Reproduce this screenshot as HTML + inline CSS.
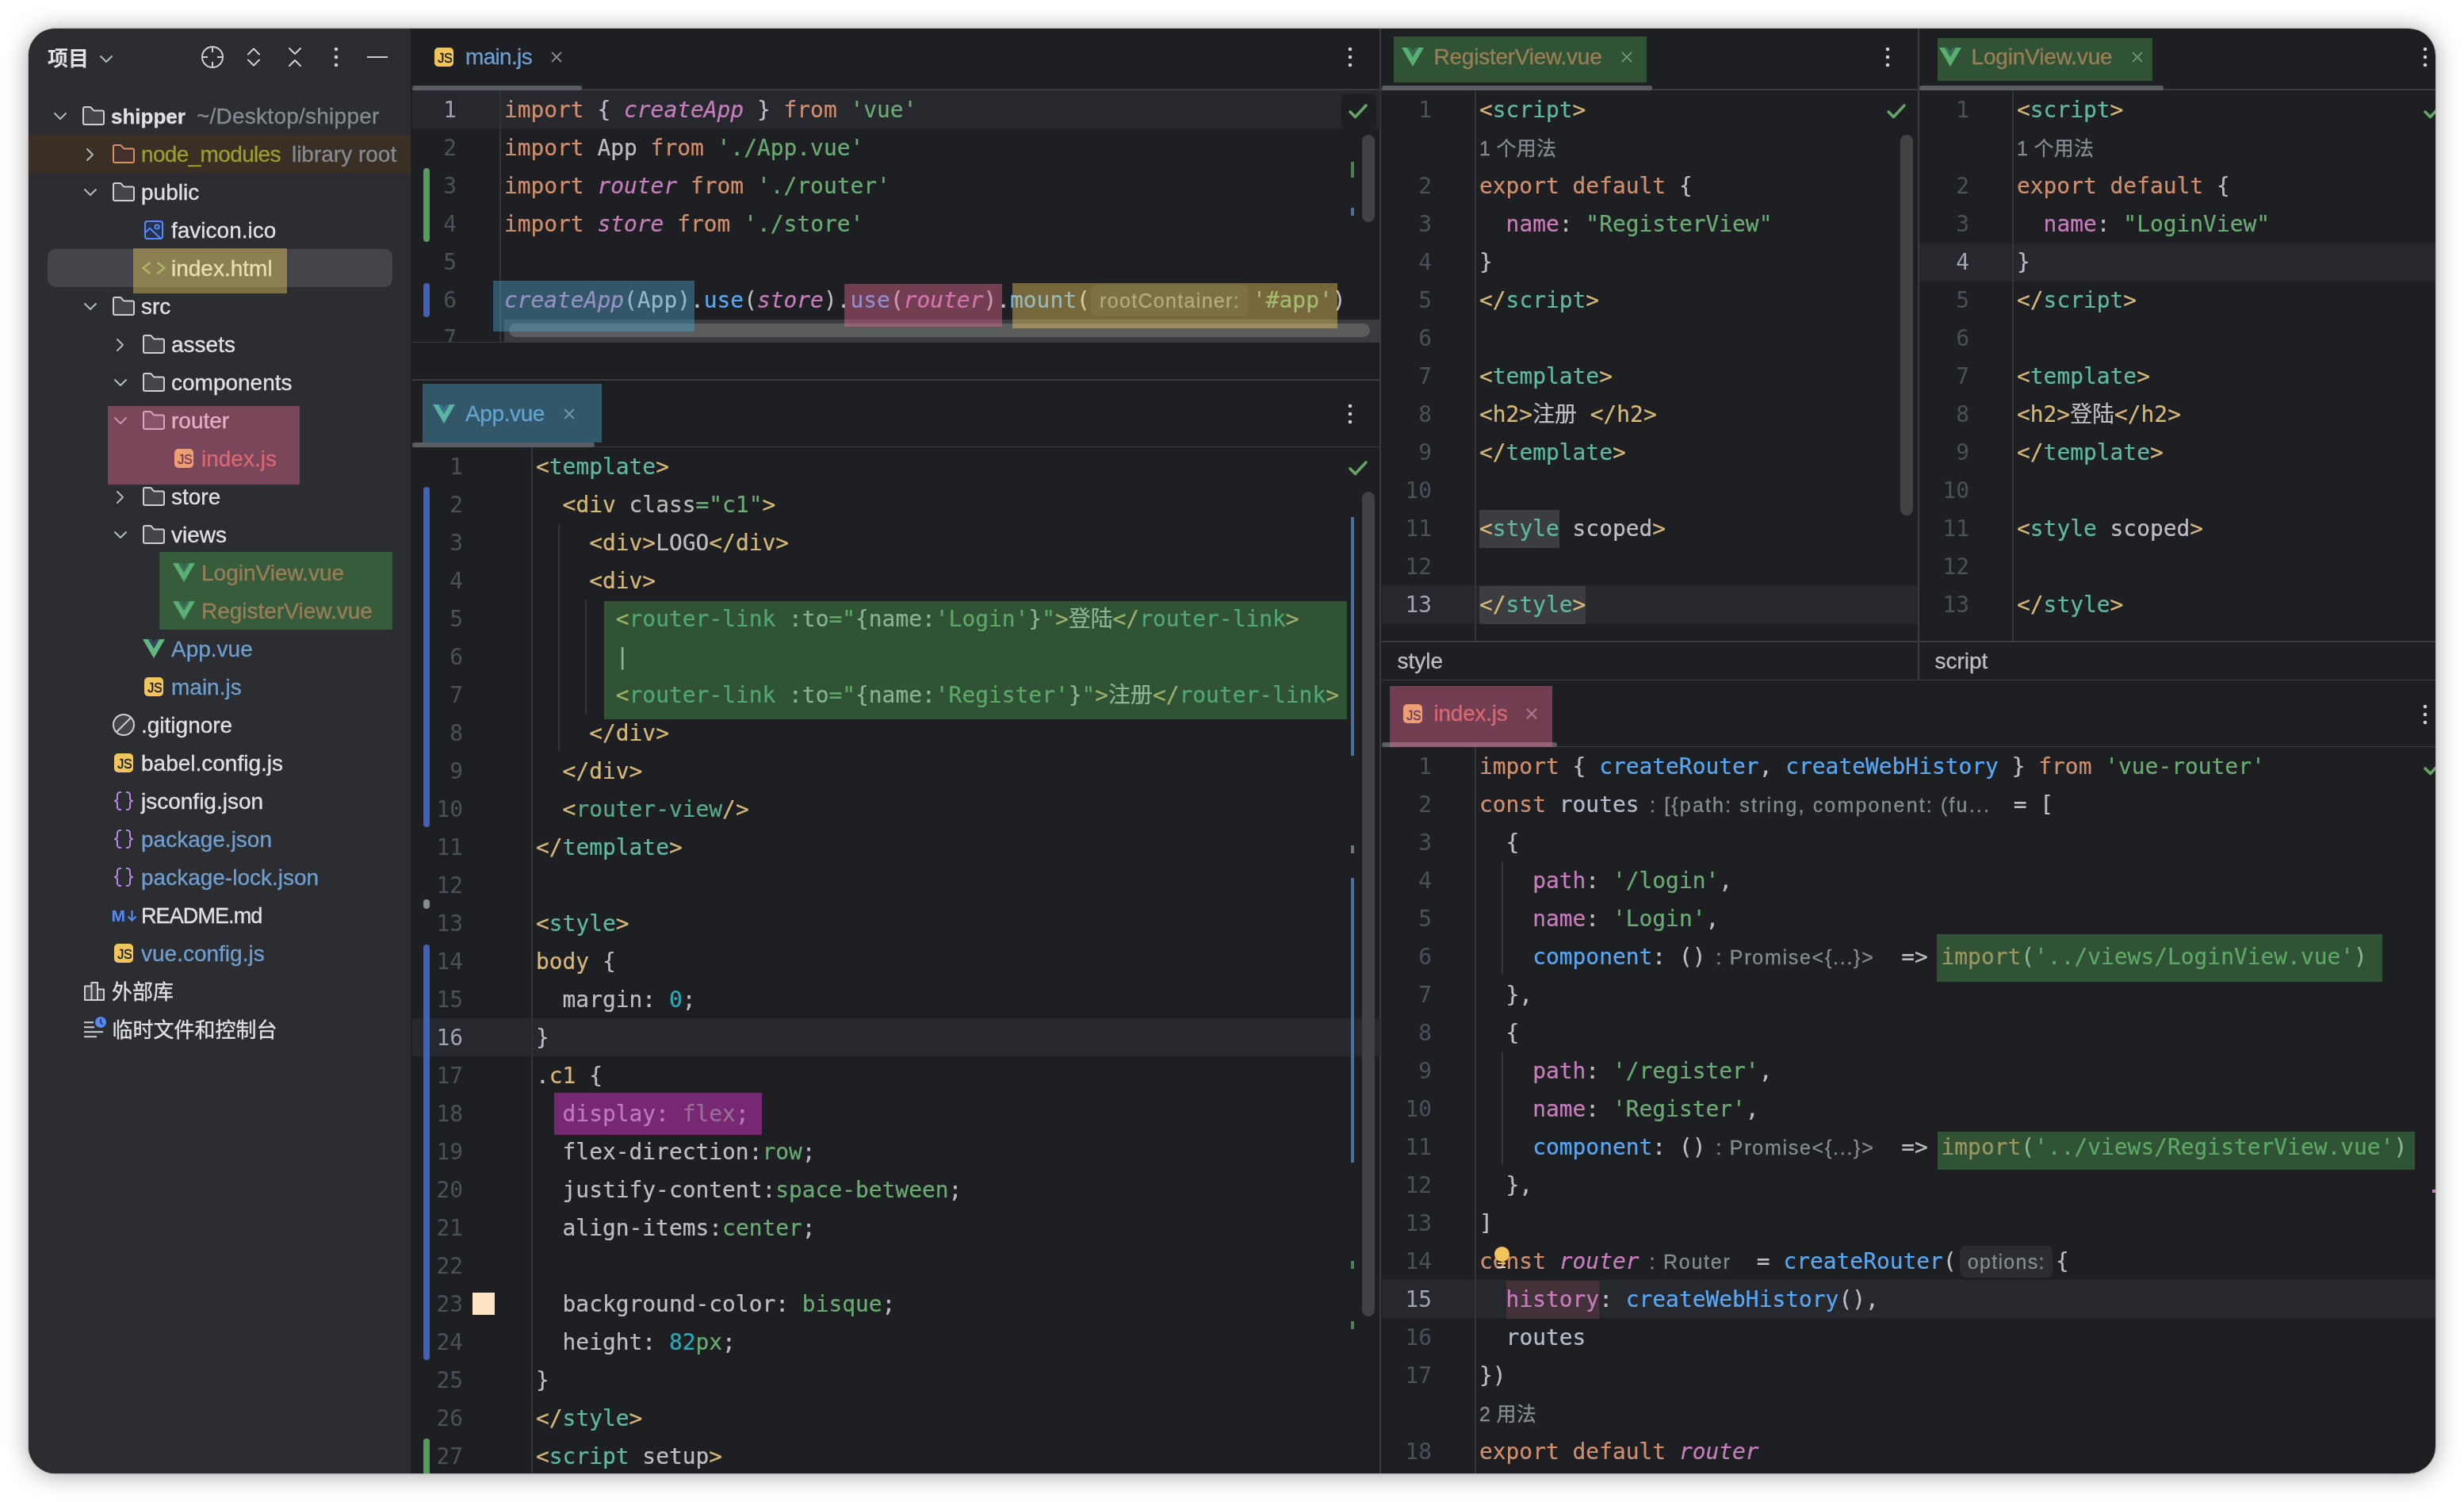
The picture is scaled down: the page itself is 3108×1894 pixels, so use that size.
<!DOCTYPE html><html lang="zh"><head><meta charset="utf-8"><title>shipper</title><style>
*{box-sizing:border-box}
html,body{margin:0;padding:0}
body{width:3108px;height:1894px;background:#fff;overflow:hidden;position:relative;font-family:"Liberation Sans","Noto Sans CJK SC",sans-serif}
#win{will-change:transform;position:absolute;left:36px;top:36px;width:3036px;height:1822px;border-radius:34px;background:#1e1f22;overflow:hidden}
#shadow{position:absolute;left:36px;top:36px;width:3036px;height:1822px;border-radius:34px;box-shadow:0 2px 30px rgba(0,0,0,.36),0 0 1.5px rgba(0,0,0,.6)}
.abs{position:absolute}
#side{position:absolute;left:0;top:0;width:482px;height:1822px;background:#2b2d30}
.row{position:absolute;left:0;height:48px;line-height:48px;font-size:28px;letter-spacing:0;color:#dfe1e5;white-space:pre}
.row .g{color:#868a91}
.row,.tab,.bc,.ih,.ihb{-webkit-text-stroke:.3px}
.mono,.ln,.cl{font-family:"DejaVu Sans Mono","Liberation Mono","Noto Sans CJK SC",monospace;font-size:27.9px}
.mt{background:#3b3d41;display:inline-block;height:48px}
.wr{background:#43313a;display:inline-block;height:48px}
.cl{-webkit-text-stroke:.22px;position:absolute;height:48px;line-height:48px;white-space:pre;color:#bcbec4}
.ln{position:absolute;height:48px;line-height:48px;text-align:right;color:#4b5059;width:80px}
.ln.cur{color:#a1a3ab}
.hl{position:absolute;background:#26282e;height:48px}
.vline{position:absolute;width:2px;background:#313438}
.hline{position:absolute;height:2px;background:#393b40}
.k{color:#cf8e6d}.s{color:#6aab73}.n{color:#2aacb8}.p{color:#c77dbb}.pi{color:#c77dbb;font-style:italic}
.f{color:#56a8f5}.t{color:#d5b778}.v{color:#5fb8a0}.c{color:#57aa88}.a{color:#bababa}.lv{color:#b3bcc7}
.ih{font-family:"Liberation Sans","Noto Sans CJK SC",sans-serif;font-size:25px;letter-spacing:.3px;color:#868a91;display:inline-block;white-space:pre;height:48px;vertical-align:top}
.ihb{font-family:"Liberation Sans",sans-serif;font-size:25px;letter-spacing:.3px;color:#868a91;display:inline-block;white-space:pre;background:#2b2d30;border-radius:8px;height:40px;line-height:40px;vertical-align:top;margin-top:4px;text-align:center}
.tab{position:absolute;font-size:27px;letter-spacing:.4px;white-space:pre;height:48px;line-height:48px}
.bc{position:absolute;font-size:28px;letter-spacing:0;color:#bcbec4;height:48px;line-height:48px}
svg{position:absolute;overflow:visible}
</style></head><body>
<div id="shadow"></div><div id="win">
<div id="side">
<div class="abs" style="left:24px;top:13.5px;height:48px;line-height:48px;font-size:26px;font-weight:bold;color:#dfe1e5;letter-spacing:0">项目</div>
<svg style="left:90px;top:33.5px" width="16" height="9" viewBox="0 0 16 9" ><path d="M1 1 L8 8 L15 1" fill="none" stroke="#b4b8bf" stroke-width="2" stroke-linecap="round" stroke-linejoin="round"/></svg>
<svg style="left:218px;top:22px" width="28" height="28" viewBox="0 0 28 28" ><circle cx="14" cy="14" r="13" fill="none" stroke="#ced0d6" stroke-width="2"/><path d="M14 1 V8 M14 20 V27 M1 14 H8 M20 14 H27" stroke="#ced0d6" stroke-width="2"/></svg>
<svg style="left:276px;top:24px" width="16" height="24" viewBox="0 0 16 24" ><path d="M1 8.5 L8 1.5 L15 8.5 M1 15.5 L8 22.5 L15 15.5" fill="none" stroke="#ced0d6" stroke-width="2" stroke-linecap="round" stroke-linejoin="round"/></svg>
<svg style="left:328px;top:24px" width="16" height="24" viewBox="0 0 16 24" ><path d="M1 1 L8 8 L15 1 M1 23 L8 16 L15 23" fill="none" stroke="#ced0d6" stroke-width="2" stroke-linecap="round" stroke-linejoin="round"/></svg>
<svg style="left:385px;top:23px" width="6" height="26" viewBox="0 0 6 26" ><circle cx="3" cy="3" r="2.3" fill="#ced0d6"/><circle cx="3" cy="13" r="2.3" fill="#ced0d6"/><circle cx="3" cy="23" r="2.3" fill="#ced0d6"/></svg>
<div class="abs" style="left:427px;top:35px;width:26px;height:2px;background:#ced0d6;"></div>
<div class="abs" style="left:0px;top:134px;width:482px;height:48px;background:#3a2f25;"></div>
<div class="abs" style="left:24px;top:278px;width:434.5px;height:48px;border-radius:10px;background:#43454a"></div>
<svg style="left:32px;top:105.5px" width="16" height="9" viewBox="0 0 16 9" ><path d="M1 1 L8 8 L15 1" fill="none" stroke="#b4b8bf" stroke-width="2" stroke-linecap="round" stroke-linejoin="round"/></svg>
<svg style="left:68px;top:98px" width="28" height="24" viewBox="0 0 28 24" ><path d="M3 1 H9.2 C10 1 10.6 1.3 11.1 1.9 L13.6 4.9 C14 5.4 14.6 5.6 15.2 5.6 H25 A2 2 0 0 1 27 7.6 V21 A2 2 0 0 1 25 23 H3 A2 2 0 0 1 1 21 V3 A2 2 0 0 1 3 1 Z" fill="#43454a" stroke="#ced0d6" stroke-width="2" stroke-linejoin="round"/></svg>
<div class="row" style="left:104px;top:87px;"><b style="letter-spacing:0;font-size:26px">shipper</b><span class="g" style="margin-left:14px;letter-spacing:0.25px">~/Desktop/shipper</span></div>
<svg style="left:73px;top:151px" width="9" height="16" viewBox="0 0 9 16" ><path d="M1 1 L8 8 L1 15" fill="none" stroke="#b4b8bf" stroke-width="2" stroke-linecap="round" stroke-linejoin="round"/></svg>
<svg style="left:106px;top:146px" width="28" height="24" viewBox="0 0 28 24" ><path d="M3 1 H9.2 C10 1 10.6 1.3 11.1 1.9 L13.6 4.9 C14 5.4 14.6 5.6 15.2 5.6 H25 A2 2 0 0 1 27 7.6 V21 A2 2 0 0 1 25 23 H3 A2 2 0 0 1 1 21 V3 A2 2 0 0 1 3 1 Z" fill="#43302a" stroke="#d98f63" stroke-width="2" stroke-linejoin="round"/></svg>
<div class="row" style="left:142px;top:135px;color:#9c9d2e;letter-spacing:-.65px;">node_modules<span class="g" style="margin-left:14px;letter-spacing:0px">library root</span></div>
<svg style="left:70px;top:201.5px" width="16" height="9" viewBox="0 0 16 9" ><path d="M1 1 L8 8 L15 1" fill="none" stroke="#b4b8bf" stroke-width="2" stroke-linecap="round" stroke-linejoin="round"/></svg>
<svg style="left:106px;top:194px" width="28" height="24" viewBox="0 0 28 24" ><path d="M3 1 H9.2 C10 1 10.6 1.3 11.1 1.9 L13.6 4.9 C14 5.4 14.6 5.6 15.2 5.6 H25 A2 2 0 0 1 27 7.6 V21 A2 2 0 0 1 25 23 H3 A2 2 0 0 1 1 21 V3 A2 2 0 0 1 3 1 Z" fill="#43454a" stroke="#ced0d6" stroke-width="2" stroke-linejoin="round"/></svg>
<div class="row" style="left:142px;top:183px;">public</div>
<svg style="left:146px;top:242px" width="24" height="24" viewBox="0 0 24 24" ><rect x="1" y="1" width="22" height="22" rx="3" fill="#25324d" stroke="#548af7" stroke-width="2"/><circle cx="16" cy="8" r="2.6" fill="none" stroke="#548af7" stroke-width="2"/><path d="M1.5 15 L7 10 L21 23" fill="none" stroke="#548af7" stroke-width="2" stroke-linejoin="round"/></svg>
<div class="row" style="left:180px;top:231px;">favicon.ico</div>
<svg style="left:143px;top:294px" width="30" height="16" viewBox="0 0 30 16" ><path d="M10.5 1 L1.5 8 L10.5 15 M19.5 1 L28.5 8 L19.5 15" fill="none" stroke="#7aa65a" stroke-width="2.4" stroke-linejoin="miter"/></svg>
<div class="row" style="left:180px;top:279px;">index.html</div>
<svg style="left:70px;top:345.5px" width="16" height="9" viewBox="0 0 16 9" ><path d="M1 1 L8 8 L15 1" fill="none" stroke="#b4b8bf" stroke-width="2" stroke-linecap="round" stroke-linejoin="round"/></svg>
<svg style="left:106px;top:338px" width="28" height="24" viewBox="0 0 28 24" ><path d="M3 1 H9.2 C10 1 10.6 1.3 11.1 1.9 L13.6 4.9 C14 5.4 14.6 5.6 15.2 5.6 H25 A2 2 0 0 1 27 7.6 V21 A2 2 0 0 1 25 23 H3 A2 2 0 0 1 1 21 V3 A2 2 0 0 1 3 1 Z" fill="#43454a" stroke="#ced0d6" stroke-width="2" stroke-linejoin="round"/></svg>
<div class="row" style="left:142px;top:327px;">src</div>
<svg style="left:111px;top:391px" width="9" height="16" viewBox="0 0 9 16" ><path d="M1 1 L8 8 L1 15" fill="none" stroke="#b4b8bf" stroke-width="2" stroke-linecap="round" stroke-linejoin="round"/></svg>
<svg style="left:144px;top:386px" width="28" height="24" viewBox="0 0 28 24" ><path d="M3 1 H9.2 C10 1 10.6 1.3 11.1 1.9 L13.6 4.9 C14 5.4 14.6 5.6 15.2 5.6 H25 A2 2 0 0 1 27 7.6 V21 A2 2 0 0 1 25 23 H3 A2 2 0 0 1 1 21 V3 A2 2 0 0 1 3 1 Z" fill="#43454a" stroke="#ced0d6" stroke-width="2" stroke-linejoin="round"/></svg>
<div class="row" style="left:180px;top:375px;">assets</div>
<svg style="left:108px;top:441.5px" width="16" height="9" viewBox="0 0 16 9" ><path d="M1 1 L8 8 L15 1" fill="none" stroke="#b4b8bf" stroke-width="2" stroke-linecap="round" stroke-linejoin="round"/></svg>
<svg style="left:144px;top:434px" width="28" height="24" viewBox="0 0 28 24" ><path d="M3 1 H9.2 C10 1 10.6 1.3 11.1 1.9 L13.6 4.9 C14 5.4 14.6 5.6 15.2 5.6 H25 A2 2 0 0 1 27 7.6 V21 A2 2 0 0 1 25 23 H3 A2 2 0 0 1 1 21 V3 A2 2 0 0 1 3 1 Z" fill="#43454a" stroke="#ced0d6" stroke-width="2" stroke-linejoin="round"/></svg>
<div class="row" style="left:180px;top:423px;">components</div>
<svg style="left:108px;top:489.5px" width="16" height="9" viewBox="0 0 16 9" ><path d="M1 1 L8 8 L15 1" fill="none" stroke="#b4b8bf" stroke-width="2" stroke-linecap="round" stroke-linejoin="round"/></svg>
<svg style="left:144px;top:482px" width="28" height="24" viewBox="0 0 28 24" ><path d="M3 1 H9.2 C10 1 10.6 1.3 11.1 1.9 L13.6 4.9 C14 5.4 14.6 5.6 15.2 5.6 H25 A2 2 0 0 1 27 7.6 V21 A2 2 0 0 1 25 23 H3 A2 2 0 0 1 1 21 V3 A2 2 0 0 1 3 1 Z" fill="#43454a" stroke="#ced0d6" stroke-width="2" stroke-linejoin="round"/></svg>
<div class="row" style="left:180px;top:471px;">router</div>
<div class="abs" style="left:184px;top:530px;width:24px;height:24px;border-radius:5px;background:#f2c55c;color:#1e1f22;font:normal 16px 'Liberation Sans',sans-serif;-webkit-text-stroke:.45px #1e1f22;letter-spacing:-.2px;line-height:16px;text-align:right;padding:6.3px 1.6px 0 0;overflow:hidden">JS</div>
<div class="row" style="left:218px;top:519px;color:#d1675a;">index.js</div>
<svg style="left:111px;top:583px" width="9" height="16" viewBox="0 0 9 16" ><path d="M1 1 L8 8 L1 15" fill="none" stroke="#b4b8bf" stroke-width="2" stroke-linecap="round" stroke-linejoin="round"/></svg>
<svg style="left:144px;top:578px" width="28" height="24" viewBox="0 0 28 24" ><path d="M3 1 H9.2 C10 1 10.6 1.3 11.1 1.9 L13.6 4.9 C14 5.4 14.6 5.6 15.2 5.6 H25 A2 2 0 0 1 27 7.6 V21 A2 2 0 0 1 25 23 H3 A2 2 0 0 1 1 21 V3 A2 2 0 0 1 3 1 Z" fill="#43454a" stroke="#ced0d6" stroke-width="2" stroke-linejoin="round"/></svg>
<div class="row" style="left:180px;top:567px;">store</div>
<svg style="left:108px;top:633.5px" width="16" height="9" viewBox="0 0 16 9" ><path d="M1 1 L8 8 L15 1" fill="none" stroke="#b4b8bf" stroke-width="2" stroke-linecap="round" stroke-linejoin="round"/></svg>
<svg style="left:144px;top:626px" width="28" height="24" viewBox="0 0 28 24" ><path d="M3 1 H9.2 C10 1 10.6 1.3 11.1 1.9 L13.6 4.9 C14 5.4 14.6 5.6 15.2 5.6 H25 A2 2 0 0 1 27 7.6 V21 A2 2 0 0 1 25 23 H3 A2 2 0 0 1 1 21 V3 A2 2 0 0 1 3 1 Z" fill="#43454a" stroke="#ced0d6" stroke-width="2" stroke-linejoin="round"/></svg>
<div class="row" style="left:180px;top:615px;">views</div>
<svg style="left:182px;top:673.5px" width="28" height="24" viewBox="0 0 28 24" ><path d="M0 0 H7 L14 11.8 L21 0 H28 L14 24 Z" fill="#5fb883"/><path d="M7 0 H11.3 L14 4.7 L16.7 0 H21 L14 11.8 Z" fill="#35495e"/></svg>
<div class="row" style="left:218px;top:663px;color:#d1675a;">LoginView.vue</div>
<svg style="left:182px;top:721.5px" width="28" height="24" viewBox="0 0 28 24" ><path d="M0 0 H7 L14 11.8 L21 0 H28 L14 24 Z" fill="#5fb883"/><path d="M7 0 H11.3 L14 4.7 L16.7 0 H21 L14 11.8 Z" fill="#35495e"/></svg>
<div class="row" style="left:218px;top:711px;color:#d1675a;">RegisterView.vue</div>
<svg style="left:144px;top:769.5px" width="28" height="24" viewBox="0 0 28 24" ><path d="M0 0 H7 L14 11.8 L21 0 H28 L14 24 Z" fill="#5fb883"/><path d="M7 0 H11.3 L14 4.7 L16.7 0 H21 L14 11.8 Z" fill="#35495e"/></svg>
<div class="row" style="left:180px;top:759px;color:#6f9fd0;">App.vue</div>
<div class="abs" style="left:146px;top:818px;width:24px;height:24px;border-radius:5px;background:#f2c55c;color:#1e1f22;font:normal 16px 'Liberation Sans',sans-serif;-webkit-text-stroke:.45px #1e1f22;letter-spacing:-.2px;line-height:16px;text-align:right;padding:6.3px 1.6px 0 0;overflow:hidden">JS</div>
<div class="row" style="left:180px;top:807px;color:#6f9fd0;">main.js</div>
<svg style="left:106px;top:864px" width="28" height="28" viewBox="0 0 28 28" ><circle cx="14" cy="14" r="13" fill="#43454a" stroke="#ced0d6" stroke-width="2"/><path d="M5 23 L23 5" stroke="#ced0d6" stroke-width="2"/></svg>
<div class="row" style="left:142px;top:855px;">.gitignore</div>
<div class="abs" style="left:108px;top:914px;width:24px;height:24px;border-radius:5px;background:#f2c55c;color:#1e1f22;font:normal 16px 'Liberation Sans',sans-serif;-webkit-text-stroke:.45px #1e1f22;letter-spacing:-.2px;line-height:16px;text-align:right;padding:6.3px 1.6px 0 0;overflow:hidden">JS</div>
<div class="row" style="left:142px;top:903px;">babel.config.js</div>
<svg style="left:108px;top:962px" width="24" height="24" viewBox="0 0 24 24" ><path d="M9 1 H7.5 A3.5 3.5 0 0 0 4 4.5 V8.5 A3.5 3.5 0 0 1 1 12 A3.5 3.5 0 0 1 4 15.5 V19.5 A3.5 3.5 0 0 0 7.5 23 H9 M15 1 H16.5 A3.5 3.5 0 0 1 20 4.5 V8.5 A3.5 3.5 0 0 0 23 12 A3.5 3.5 0 0 0 20 15.5 V19.5 A3.5 3.5 0 0 1 16.5 23 H15" fill="none" stroke="#b589ec" stroke-width="2" stroke-linejoin="round"/></svg>
<div class="row" style="left:142px;top:951px;">jsconfig.json</div>
<svg style="left:108px;top:1010px" width="24" height="24" viewBox="0 0 24 24" ><path d="M9 1 H7.5 A3.5 3.5 0 0 0 4 4.5 V8.5 A3.5 3.5 0 0 1 1 12 A3.5 3.5 0 0 1 4 15.5 V19.5 A3.5 3.5 0 0 0 7.5 23 H9 M15 1 H16.5 A3.5 3.5 0 0 1 20 4.5 V8.5 A3.5 3.5 0 0 0 23 12 A3.5 3.5 0 0 0 20 15.5 V19.5 A3.5 3.5 0 0 1 16.5 23 H15" fill="none" stroke="#b589ec" stroke-width="2" stroke-linejoin="round"/></svg>
<div class="row" style="left:142px;top:999px;color:#6f9fd0;">package.json</div>
<svg style="left:108px;top:1058px" width="24" height="24" viewBox="0 0 24 24" ><path d="M9 1 H7.5 A3.5 3.5 0 0 0 4 4.5 V8.5 A3.5 3.5 0 0 1 1 12 A3.5 3.5 0 0 1 4 15.5 V19.5 A3.5 3.5 0 0 0 7.5 23 H9 M15 1 H16.5 A3.5 3.5 0 0 1 20 4.5 V8.5 A3.5 3.5 0 0 0 23 12 A3.5 3.5 0 0 0 20 15.5 V19.5 A3.5 3.5 0 0 1 16.5 23 H15" fill="none" stroke="#b589ec" stroke-width="2" stroke-linejoin="round"/></svg>
<div class="row" style="left:142px;top:1047px;color:#6f9fd0;">package-lock.json</div>
<div class="abs" style="left:104.5px;top:1107px;width:20px;height:24px;color:#548af7;font:bold 21px 'Liberation Sans',sans-serif;line-height:24px;letter-spacing:0">M</div>
<svg style="left:123.5px;top:1111px" width="13" height="16" viewBox="0 0 13 16" ><path d="M6.5 1 V13.5 M1.5 8.8 L6.5 13.8 L11.5 8.8" fill="none" stroke="#548af7" stroke-width="2.2"/></svg>
<div class="row" style="left:142px;top:1095px;letter-spacing:-.9px;font-size:27px;">README.md</div>
<div class="abs" style="left:108px;top:1154px;width:24px;height:24px;border-radius:5px;background:#f2c55c;color:#1e1f22;font:normal 16px 'Liberation Sans',sans-serif;-webkit-text-stroke:.45px #1e1f22;letter-spacing:-.2px;line-height:16px;text-align:right;padding:6.3px 1.6px 0 0;overflow:hidden">JS</div>
<div class="row" style="left:142px;top:1143px;color:#6f9fd0;">vue.config.js</div>
<svg style="left:70px;top:1202px" width="26" height="24" viewBox="0 0 26 24" ><path d="M1 5.5 H9.5 V23 H1 Z M9.5 1 H17 V23 H9.5 Z M17 9.5 H25 V23 H17 Z" fill="#43454a" stroke="#ced0d6" stroke-width="2" stroke-linejoin="round"/></svg>
<div class="row" style="left:105px;top:1191px;font-size:26px;letter-spacing:0;">外部库</div>
<svg style="left:70px;top:1245px" width="30" height="30" viewBox="0 0 30 30" ><path d="M0 8.2 H12 M0 14.2 H13 M0 20.2 H24 M0 26.2 H16" stroke="#ced0d6" stroke-width="2" fill="none"/><circle cx="21" cy="8" r="7" fill="#548af7"/><path d="M21 3.8 V8.3 L23.8 11" stroke="#2b2d30" stroke-width="1.6" fill="none"/></svg>
<div class="row" style="left:105.5px;top:1239px;font-size:26px;letter-spacing:0;">临时文件和控制台</div>
<div class="abs" style="left:132px;top:277px;width:194px;height:57px;background:rgba(249,214,101,.40);"></div>
<div class="abs" style="left:100px;top:475.5px;width:242px;height:99.0px;background:rgba(230,105,150,.42);"></div>
<div class="abs" style="left:165px;top:659.5px;width:294px;height:98.5px;background:rgba(73,162,80,.40);"></div>
</div>
<div class="abs" style="left:1704px;top:0px;width:2px;height:1822px;background:#393b40;"></div>
<div class="abs" style="left:2383px;top:0px;width:2px;height:821px;background:#393b40;"></div>
<div class="abs" style="left:484px;top:76px;width:2553px;height:1.5px;background:#393b40;"></div>
<div class="abs" style="left:484px;top:394.8px;width:1220.5px;height:1.5px;background:#393b40;"></div>
<div class="abs" style="left:484px;top:442.3px;width:1220.5px;height:1.7px;background:#393b40;"></div>
<div class="abs" style="left:484px;top:526.5px;width:1220.5px;height:1.5px;background:#393b40;"></div>
<div class="abs" style="left:1706.5px;top:772px;width:1330.5px;height:1.5px;background:#393b40;"></div>
<div class="abs" style="left:1706.5px;top:820.5px;width:1330.5px;height:1.7px;background:#393b40;"></div>
<div class="abs" style="left:1706.5px;top:904.5px;width:1330.5px;height:1.5px;background:#393b40;"></div>
<div class="abs" style="left:512px;top:24px;width:24px;height:24px;border-radius:5px;background:#f2c55c;color:#1e1f22;font:normal 16px 'Liberation Sans',sans-serif;-webkit-text-stroke:.45px #1e1f22;letter-spacing:-.2px;line-height:16px;text-align:right;padding:6.3px 1.6px 0 0;overflow:hidden">JS</div>
<div class="tab" style="left:551px;top:12px;color:#6f9fd0;font-size:28px;letter-spacing:-0.67px">main.js</div>
<svg style="left:659.3px;top:29.3px" width="14" height="14" viewBox="0 0 14 14" ><path d="M1 1 L13 13 M13 1 L1 13" stroke="#868a91" stroke-width="1.8" fill="none"/></svg>
<svg style="left:1663.7px;top:23px" width="6" height="26" viewBox="0 0 6 26" ><circle cx="3" cy="3" r="2.3" fill="#ced0d6"/><circle cx="3" cy="13" r="2.3" fill="#ced0d6"/><circle cx="3" cy="23" r="2.3" fill="#ced0d6"/></svg>
<div class="abs" style="left:484px;top:72px;width:214px;height:5.5px;border-radius:3px;background:#5a5d63"></div>
<div class="abs" style="left:484px;top:78px;width:1220.5px;height:316.8px;overflow:hidden">
<div class="hl" style="left:0;top:0.3px;width:1220.5px"></div>
<div class="vline" style="left:110.4px;top:0;height:316.8px;width:1.5px;background:#313438"></div>
<div class="ln cur" style="left:-24px;top:0.7px">1</div>
<div class="cl" style="left:115.9px;top:0.7px"><span class="k">import</span> { <span class="pi">createApp</span> } <span class="k">from</span> <span class="s">&#x27;vue&#x27;</span></div>
<div class="ln" style="left:-24px;top:48.7px">2</div>
<div class="cl" style="left:115.9px;top:48.7px"><span class="k">import</span> App <span class="k">from</span> <span class="s">&#x27;./App.vue&#x27;</span></div>
<div class="ln" style="left:-24px;top:96.7px">3</div>
<div class="cl" style="left:115.9px;top:96.7px"><span class="k">import</span> <span class="pi">router</span> <span class="k">from</span> <span class="s">&#x27;./router&#x27;</span></div>
<div class="ln" style="left:-24px;top:144.7px">4</div>
<div class="cl" style="left:115.9px;top:144.7px"><span class="k">import</span> <span class="pi">store</span> <span class="k">from</span> <span class="s">&#x27;./store&#x27;</span></div>
<div class="ln" style="left:-24px;top:192.7px">5</div>
<div class="ln" style="left:-24px;top:240.7px">6</div>
<div class="cl" style="left:115.9px;top:240.7px"><span class="pi">createApp</span>(App).<span class="f">use</span>(<span class="pi">store</span>).<span class="f">use</span>(<span class="pi">router</span>).<span class="f">mount</span>(<span class="ihb" style="width:198.5px;margin-left:1.5px;margin-right:5.2px;letter-spacing:1.327px;font-size:25px">rootContainer:</span><span class="s">&#x27;#app&#x27;</span>)</div>
<div class="ln" style="left:-24px;top:288.7px">7</div>
</div>
<div class="abs" style="left:498px;top:176px;width:8px;height:92.5px;border-radius:4px;background:#5a9a62"></div>
<div class="abs" style="left:498px;top:320.5px;width:8px;height:43.5px;border-radius:4px;background:#4561b0"></div>
<div class="abs" style="left:600px;top:366.5px;width:1104.5px;height:28.3px;background:#3a3b3e;"></div>
<div class="abs" style="left:605.5px;top:372px;width:1086.0px;height:16.5px;border-radius:8.5px;background:#5b5c5e"></div>
<div class="abs" style="left:1655.7px;top:82px;width:44px;height:44px;border-radius:7px;background:#1e1f22"></div>
<svg style="left:1664.6px;top:93.5px" width="24" height="20" viewBox="0 0 24 20" ><path d="M2 11 L8.5 17.5 L22 3" fill="none" stroke="#67a566" stroke-width="3.6" stroke-linecap="round" stroke-linejoin="round"/></svg>
<div class="abs" style="left:1681.7px;top:134px;width:16px;height:110px;border-radius:8px;background:#414244"></div>
<div class="abs" style="left:1667.8px;top:168px;width:4.2px;height:20px;background:#4e8054;"></div>
<div class="abs" style="left:1667.8px;top:226px;width:4.2px;height:10px;background:#4e6f9e;"></div>
<svg style="left:510px;top:473.5px" width="28" height="24" viewBox="0 0 28 24" ><path d="M0 0 H7 L14 11.8 L21 0 H28 L14 24 Z" fill="#5fb883"/><path d="M7 0 H11.3 L14 4.7 L16.7 0 H21 L14 11.8 Z" fill="#35495e"/></svg>
<div class="tab" style="left:551px;top:462.3px;color:#6f9fd0;font-size:28px;letter-spacing:-0.392px">App.vue</div>
<svg style="left:675px;top:479.3px" width="14" height="14" viewBox="0 0 14 14" ><path d="M1 1 L13 13 M13 1 L1 13" stroke="#868a91" stroke-width="1.8" fill="none"/></svg>
<svg style="left:1663.7px;top:473px" width="6" height="26" viewBox="0 0 6 26" ><circle cx="3" cy="3" r="2.3" fill="#ced0d6"/><circle cx="3" cy="13" r="2.3" fill="#ced0d6"/><circle cx="3" cy="23" r="2.3" fill="#ced0d6"/></svg>
<div class="abs" style="left:484px;top:522.3px;width:230px;height:5.7000000000000455px;border-radius:3px;background:#5a5d63"></div>
<div class="abs" style="left:484px;top:528px;width:1220.5px;height:1294px;overflow:hidden">
<div class="hl" style="left:0;top:720.3px;width:1220.5px"></div>
<div class="vline" style="left:150.4px;top:0;height:1294px;width:1.5px;background:#313438"></div>
<div class="ln" style="left:-16px;top:0.7px">1</div>
<div class="cl" style="left:156.0px;top:0.7px"><span class="t">&lt;</span><span class="v">template</span><span class="t">&gt;</span></div>
<div class="ln" style="left:-16px;top:48.7px">2</div>
<div class="cl" style="left:156.0px;top:48.7px">  <span class="t">&lt;div</span> <span class="a">class</span><span class="s">=&quot;c1&quot;</span><span class="t">&gt;</span></div>
<div class="ln" style="left:-16px;top:96.7px">3</div>
<div class="cl" style="left:156.0px;top:96.7px">    <span class="t">&lt;div&gt;</span>LOGO<span class="t">&lt;/div&gt;</span></div>
<div class="ln" style="left:-16px;top:144.7px">4</div>
<div class="cl" style="left:156.0px;top:144.7px">    <span class="t">&lt;div&gt;</span></div>
<div class="ln" style="left:-16px;top:192.7px">5</div>
<div class="cl" style="left:156.0px;top:192.7px">      <span class="t">&lt;</span><span class="c">router-link</span> <span class="a">:to</span><span class="s">=&quot;</span>{<span class="a">name</span>:<span class="s">&#x27;Login&#x27;</span>}<span class="s">&quot;</span><span class="t">&gt;</span>登陆<span class="t">&lt;/</span><span class="c">router-link</span><span class="t">&gt;</span></div>
<div class="ln" style="left:-16px;top:240.7px">6</div>
<div class="cl" style="left:156.0px;top:240.7px">      |</div>
<div class="ln" style="left:-16px;top:288.7px">7</div>
<div class="cl" style="left:156.0px;top:288.7px">      <span class="t">&lt;</span><span class="c">router-link</span> <span class="a">:to</span><span class="s">=&quot;</span>{<span class="a">name</span>:<span class="s">&#x27;Register&#x27;</span>}<span class="s">&quot;</span><span class="t">&gt;</span>注册<span class="t">&lt;/</span><span class="c">router-link</span><span class="t">&gt;</span></div>
<div class="ln" style="left:-16px;top:336.7px">8</div>
<div class="cl" style="left:156.0px;top:336.7px">    <span class="t">&lt;/div&gt;</span></div>
<div class="ln" style="left:-16px;top:384.7px">9</div>
<div class="cl" style="left:156.0px;top:384.7px">  <span class="t">&lt;/div&gt;</span></div>
<div class="ln" style="left:-16px;top:432.7px">10</div>
<div class="cl" style="left:156.0px;top:432.7px">  <span class="t">&lt;</span><span class="c">router-view</span><span class="t">/&gt;</span></div>
<div class="ln" style="left:-16px;top:480.7px">11</div>
<div class="cl" style="left:156.0px;top:480.7px"><span class="t">&lt;/</span><span class="v">template</span><span class="t">&gt;</span></div>
<div class="ln" style="left:-16px;top:528.7px">12</div>
<div class="ln" style="left:-16px;top:576.7px">13</div>
<div class="cl" style="left:156.0px;top:576.7px"><span class="t">&lt;</span><span class="v">style</span><span class="t">&gt;</span></div>
<div class="ln" style="left:-16px;top:624.7px">14</div>
<div class="cl" style="left:156.0px;top:624.7px"><span class="t">body</span> {</div>
<div class="ln" style="left:-16px;top:672.7px">15</div>
<div class="cl" style="left:156.0px;top:672.7px">  margin: <span class="n">0</span>;</div>
<div class="ln cur" style="left:-16px;top:720.7px">16</div>
<div class="cl" style="left:156.0px;top:720.7px">}</div>
<div class="ln" style="left:-16px;top:768.7px">17</div>
<div class="cl" style="left:156.0px;top:768.7px">.<span class="t">c1</span> {</div>
<div class="ln" style="left:-16px;top:816.7px">18</div>
<div class="cl" style="left:156.0px;top:816.7px">  display: <span class="s">flex</span>;</div>
<div class="ln" style="left:-16px;top:864.7px">19</div>
<div class="cl" style="left:156.0px;top:864.7px">  flex-direction:<span class="s">row</span>;</div>
<div class="ln" style="left:-16px;top:912.7px">20</div>
<div class="cl" style="left:156.0px;top:912.7px">  justify-content:<span class="s">space-between</span>;</div>
<div class="ln" style="left:-16px;top:960.7px">21</div>
<div class="cl" style="left:156.0px;top:960.7px">  align-items:<span class="s">center</span>;</div>
<div class="ln" style="left:-16px;top:1008.7px">22</div>
<div class="ln" style="left:-16px;top:1056.7px">23</div>
<div class="cl" style="left:156.0px;top:1056.7px">  background-color: <span class="s">bisque</span>;</div>
<div class="ln" style="left:-16px;top:1104.7px">24</div>
<div class="cl" style="left:156.0px;top:1104.7px">  height: <span class="n">82</span><span class="s">px</span>;</div>
<div class="ln" style="left:-16px;top:1152.7px">25</div>
<div class="cl" style="left:156.0px;top:1152.7px">}</div>
<div class="ln" style="left:-16px;top:1200.7px">26</div>
<div class="cl" style="left:156.0px;top:1200.7px"><span class="t">&lt;/</span><span class="v">style</span><span class="t">&gt;</span></div>
<div class="ln" style="left:-16px;top:1248.7px">27</div>
<div class="cl" style="left:156.0px;top:1248.7px"><span class="t">&lt;</span><span class="v">script</span> setup<span class="t">&gt;</span></div>
</div>
<div class="abs" style="left:668.3px;top:625px;width:1.9px;height:286px;background:#313438;"></div>
<div class="abs" style="left:702.3px;top:721px;width:1.9px;height:143px;background:#313438;"></div>
<div class="abs" style="left:498px;top:578px;width:8px;height:428.5px;border-radius:4px;background:#4561b0"></div>
<div class="abs" style="left:498px;top:1155px;width:8px;height:523.5px;border-radius:4px;background:#4561b0"></div>
<div class="abs" style="left:498px;top:1778px;width:8px;height:56px;border-radius:4px;background:#5a9a62"></div>
<div class="abs" style="left:498px;top:1097.5px;width:8px;height:12.5px;border-radius:4px;background:#868a91"></div>
<div class="abs" style="left:560px;top:1594px;width:28.3px;height:28.3px;background:#ffe4c4;"></div>
<svg style="left:1664.6px;top:544px" width="24" height="20" viewBox="0 0 24 20" ><path d="M2 11 L8.5 17.5 L22 3" fill="none" stroke="#67a566" stroke-width="3.6" stroke-linecap="round" stroke-linejoin="round"/></svg>
<div class="abs" style="left:1681.7px;top:584px;width:16px;height:1040px;border-radius:8px;background:#414244"></div>
<div class="abs" style="left:586px;top:317.5px;width:253.7px;height:64.2px;background:rgba(78,173,209,.40);"></div>
<div class="abs" style="left:1029px;top:321.5px;width:198.8px;height:54.2px;background:rgba(230,105,150,.42);"></div>
<div class="abs" style="left:1241px;top:320.7px;width:410px;height:57.3px;background:rgba(249,214,101,.40);"></div>
<div class="abs" style="left:497.3px;top:448px;width:225.7px;height:74.3px;background:rgba(78,173,209,.40);"></div>
<div class="abs" style="left:725.7px;top:721.7px;width:937.3px;height:149.0px;background:rgba(73,162,80,.40);"></div>
<div class="abs" style="left:662.7px;top:1341.7px;width:262.0px;height:53.0px;background:rgba(200,50,190,.52);"></div>
<div class="abs" style="left:1667.8px;top:616px;width:4.2px;height:301px;background:#4e6f9e;"></div>
<div class="abs" style="left:1667.8px;top:1030px;width:4.2px;height:10px;background:#6f737a;"></div>
<div class="abs" style="left:1667.8px;top:1070.7px;width:4.2px;height:359.3px;background:#4e6f9e;"></div>
<div class="abs" style="left:1667.8px;top:1554px;width:4.2px;height:10px;background:#4e8054;"></div>
<div class="abs" style="left:1667.8px;top:1630px;width:4.2px;height:10px;background:#4e8054;"></div>
<svg style="left:1732px;top:24px" width="28" height="24" viewBox="0 0 28 24" ><path d="M0 0 H7 L14 11.8 L21 0 H28 L14 24 Z" fill="#5fb883"/><path d="M7 0 H11.3 L14 4.7 L16.7 0 H21 L14 11.8 Z" fill="#35495e"/></svg>
<div class="tab" style="left:1772.5px;top:12px;color:#d1675a;font-size:28px;letter-spacing:-0.239px">RegisterView.vue</div>
<svg style="left:2009px;top:29.3px" width="14" height="14" viewBox="0 0 14 14" ><path d="M1 1 L13 13 M13 1 L1 13" stroke="#868a91" stroke-width="1.8" fill="none"/></svg>
<svg style="left:2341.7px;top:23px" width="6" height="26" viewBox="0 0 6 26" ><circle cx="3" cy="3" r="2.3" fill="#ced0d6"/><circle cx="3" cy="13" r="2.3" fill="#ced0d6"/><circle cx="3" cy="23" r="2.3" fill="#ced0d6"/></svg>
<div class="abs" style="left:1706.5px;top:72px;width:341.5px;height:5.5px;border-radius:3px;background:#5a5d63"></div>
<div class="abs" style="left:1706.5px;top:78px;width:676.5px;height:694px;overflow:hidden">
<div class="hl" style="left:0;top:624.3px;width:676.5px"></div>
<div class="vline" style="left:117.9px;top:0;height:694px;width:1.5px;background:#313438"></div>
<div class="ln" style="left:-16.5px;top:0.7px">1</div>
<div class="cl" style="left:123.5px;top:0.7px"><span class="t">&lt;</span><span class="v">script</span><span class="t">&gt;</span></div>
<div class="cl" style="left:123.5px;top:48.7px"><span class="ih" style="width:200px;letter-spacing:0.3px;font-size:25px;padding-left:0px;">1 个用法</span></div>
<div class="ln" style="left:-16.5px;top:96.7px">2</div>
<div class="cl" style="left:123.5px;top:96.7px"><span class="k">export</span> <span class="k">default</span> {</div>
<div class="ln" style="left:-16.5px;top:144.7px">3</div>
<div class="cl" style="left:123.5px;top:144.7px">  <span class="p">name</span>: <span class="s">&quot;RegisterView&quot;</span></div>
<div class="ln" style="left:-16.5px;top:192.7px">4</div>
<div class="cl" style="left:123.5px;top:192.7px">}</div>
<div class="ln" style="left:-16.5px;top:240.7px">5</div>
<div class="cl" style="left:123.5px;top:240.7px"><span class="t">&lt;/</span><span class="v">script</span><span class="t">&gt;</span></div>
<div class="ln" style="left:-16.5px;top:288.7px">6</div>
<div class="ln" style="left:-16.5px;top:336.7px">7</div>
<div class="cl" style="left:123.5px;top:336.7px"><span class="t">&lt;</span><span class="v">template</span><span class="t">&gt;</span></div>
<div class="ln" style="left:-16.5px;top:384.7px">8</div>
<div class="cl" style="left:123.5px;top:384.7px"><span class="t">&lt;h2&gt;</span>注册 <span class="t">&lt;/h2&gt;</span></div>
<div class="ln" style="left:-16.5px;top:432.7px">9</div>
<div class="cl" style="left:123.5px;top:432.7px"><span class="t">&lt;/</span><span class="v">template</span><span class="t">&gt;</span></div>
<div class="ln" style="left:-16.5px;top:480.7px">10</div>
<div class="ln" style="left:-16.5px;top:528.7px">11</div>
<div class="cl" style="left:123.5px;top:528.7px"><span class="mt"><span class="t">&lt;</span><span class="v">style</span></span> scoped<span class="t">&gt;</span></div>
<div class="ln" style="left:-16.5px;top:576.7px">12</div>
<div class="ln cur" style="left:-16.5px;top:624.7px">13</div>
<div class="cl" style="left:123.5px;top:624.7px"><span class="mt"><span class="t">&lt;/</span><span class="v">style</span><span class="t">&gt;</span></span></div>
</div>
<svg style="left:2344px;top:93.5px" width="24" height="20" viewBox="0 0 24 20" ><path d="M2 11 L8.5 17.5 L22 3" fill="none" stroke="#67a566" stroke-width="3.6" stroke-linecap="round" stroke-linejoin="round"/></svg>
<div class="abs" style="left:2360.7px;top:134px;width:16px;height:480px;border-radius:8px;background:#414244"></div>
<div class="bc" style="left:1726.5px;top:773.5px">style</div>
<svg style="left:2410.3px;top:24px" width="28" height="24" viewBox="0 0 28 24" ><path d="M0 0 H7 L14 11.8 L21 0 H28 L14 24 Z" fill="#5fb883"/><path d="M7 0 H11.3 L14 4.7 L16.7 0 H21 L14 11.8 Z" fill="#35495e"/></svg>
<div class="tab" style="left:2450.5px;top:12px;color:#d1675a;font-size:28px;letter-spacing:-0.16px">LoginView.vue</div>
<svg style="left:2653px;top:29.3px" width="14" height="14" viewBox="0 0 14 14" ><path d="M1 1 L13 13 M13 1 L1 13" stroke="#868a91" stroke-width="1.8" fill="none"/></svg>
<svg style="left:3019.7px;top:23px" width="6" height="26" viewBox="0 0 6 26" ><circle cx="3" cy="3" r="2.3" fill="#ced0d6"/><circle cx="3" cy="13" r="2.3" fill="#ced0d6"/><circle cx="3" cy="23" r="2.3" fill="#ced0d6"/></svg>
<div class="abs" style="left:2385px;top:72px;width:307.6999999999998px;height:5.5px;border-radius:3px;background:#5a5d63"></div>
<div class="abs" style="left:2385px;top:78px;width:652px;height:694px;overflow:hidden">
<div class="hl" style="left:0;top:192.5px;width:652px"></div>
<div class="vline" style="left:117.4px;top:0;height:694px;width:1.5px;background:#313438"></div>
<div class="ln" style="left:-17px;top:0.9px">1</div>
<div class="cl" style="left:123.0px;top:0.9px"><span class="t">&lt;</span><span class="v">script</span><span class="t">&gt;</span></div>
<div class="cl" style="left:123.0px;top:48.9px"><span class="ih" style="width:200px;letter-spacing:0.3px;font-size:25px;padding-left:0px;">1 个用法</span></div>
<div class="ln" style="left:-17px;top:96.9px">2</div>
<div class="cl" style="left:123.0px;top:96.9px"><span class="k">export</span> <span class="k">default</span> {</div>
<div class="ln" style="left:-17px;top:144.9px">3</div>
<div class="cl" style="left:123.0px;top:144.9px">  <span class="p">name</span>: <span class="s">&quot;LoginView&quot;</span></div>
<div class="ln cur" style="left:-17px;top:192.9px">4</div>
<div class="cl" style="left:123.0px;top:192.9px">}</div>
<div class="ln" style="left:-17px;top:240.9px">5</div>
<div class="cl" style="left:123.0px;top:240.9px"><span class="t">&lt;/</span><span class="v">script</span><span class="t">&gt;</span></div>
<div class="ln" style="left:-17px;top:288.9px">6</div>
<div class="ln" style="left:-17px;top:336.9px">7</div>
<div class="cl" style="left:123.0px;top:336.9px"><span class="t">&lt;</span><span class="v">template</span><span class="t">&gt;</span></div>
<div class="ln" style="left:-17px;top:384.9px">8</div>
<div class="cl" style="left:123.0px;top:384.9px"><span class="t">&lt;h2&gt;</span>登陆<span class="t">&lt;/h2&gt;</span></div>
<div class="ln" style="left:-17px;top:432.9px">9</div>
<div class="cl" style="left:123.0px;top:432.9px"><span class="t">&lt;/</span><span class="v">template</span><span class="t">&gt;</span></div>
<div class="ln" style="left:-17px;top:480.9px">10</div>
<div class="ln" style="left:-17px;top:528.9px">11</div>
<div class="cl" style="left:123.0px;top:528.9px"><span class="t">&lt;</span><span class="v">style</span> scoped<span class="t">&gt;</span></div>
<div class="ln" style="left:-17px;top:576.9px">12</div>
<div class="ln" style="left:-17px;top:624.9px">13</div>
<div class="cl" style="left:123.0px;top:624.9px"><span class="t">&lt;/</span><span class="v">style</span><span class="t">&gt;</span></div>
</div>
<svg style="left:3021px;top:93.5px" width="24" height="20" viewBox="0 0 24 20" ><path d="M2 11 L8.5 17.5 L22 3" fill="none" stroke="#67a566" stroke-width="3.6" stroke-linecap="round" stroke-linejoin="round"/></svg>
<div class="bc" style="left:2404.5px;top:773.5px">script</div>
<div class="abs" style="left:1734px;top:852.3px;width:24px;height:24px;border-radius:5px;background:#f2c55c;color:#1e1f22;font:normal 16px 'Liberation Sans',sans-serif;-webkit-text-stroke:.45px #1e1f22;letter-spacing:-.2px;line-height:16px;text-align:right;padding:6.3px 1.6px 0 0;overflow:hidden">JS</div>
<div class="tab" style="left:1772.5px;top:840.4px;color:#d1675a;font-size:28px;letter-spacing:-0.242px">index.js</div>
<svg style="left:1889px;top:857px" width="14" height="14" viewBox="0 0 14 14" ><path d="M1 1 L13 13 M13 1 L1 13" stroke="#868a91" stroke-width="1.8" fill="none"/></svg>
<svg style="left:3019.7px;top:851.7px" width="6" height="26" viewBox="0 0 6 26" ><circle cx="3" cy="3" r="2.3" fill="#ced0d6"/><circle cx="3" cy="13" r="2.3" fill="#ced0d6"/><circle cx="3" cy="23" r="2.3" fill="#ced0d6"/></svg>
<div class="abs" style="left:1706.5px;top:900px;width:221.5px;height:6px;border-radius:3px;background:#5a5d63"></div>
<div class="abs" style="left:1706.5px;top:906px;width:1330.5px;height:916px;overflow:hidden">
<div class="hl" style="left:0;top:672.3px;width:1330.5px"></div>
<div class="vline" style="left:117.9px;top:0;height:916px;width:1.5px;background:#313438"></div>
<div class="ln" style="left:-16.5px;top:0.7px">1</div>
<div class="cl" style="left:123.5px;top:0.7px"><span class="k">import</span> { <span class="f">createRouter</span>, <span class="f">createWebHistory</span> } <span class="k">from</span> <span class="s">&#x27;vue-router&#x27;</span></div>
<div class="ln" style="left:-16.5px;top:48.7px">2</div>
<div class="cl" style="left:123.5px;top:48.7px"><span class="k">const</span> <span class="lv">routes</span><span class="ih" style="width:455.4px;letter-spacing:2.161px;font-size:25px;padding-left:13.5px;">: [{path: string, component: (fu...</span> = [</div>
<div class="ln" style="left:-16.5px;top:96.7px">3</div>
<div class="cl" style="left:123.5px;top:96.7px">  {</div>
<div class="ln" style="left:-16.5px;top:144.7px">4</div>
<div class="cl" style="left:123.5px;top:144.7px">    <span class="p">path</span>: <span class="s">&#x27;/login&#x27;</span>,</div>
<div class="ln" style="left:-16.5px;top:192.7px">5</div>
<div class="cl" style="left:123.5px;top:192.7px">    <span class="p">name</span>: <span class="s">&#x27;Login&#x27;</span>,</div>
<div class="ln" style="left:-16.5px;top:240.7px">6</div>
<div class="cl" style="left:123.5px;top:240.7px">    <span class="f">component</span>: ()<span class="ih" style="width:229.9px;letter-spacing:1.73px;font-size:25px;padding-left:13px;">: Promise&lt;{...}&gt;</span> => <span class="k">import</span>(<span class="s">&#x27;../views/LoginView.vue&#x27;</span>)</div>
<div class="ln" style="left:-16.5px;top:288.7px">7</div>
<div class="cl" style="left:123.5px;top:288.7px">  },</div>
<div class="ln" style="left:-16.5px;top:336.7px">8</div>
<div class="cl" style="left:123.5px;top:336.7px">  {</div>
<div class="ln" style="left:-16.5px;top:384.7px">9</div>
<div class="cl" style="left:123.5px;top:384.7px">    <span class="p">path</span>: <span class="s">&#x27;/register&#x27;</span>,</div>
<div class="ln" style="left:-16.5px;top:432.7px">10</div>
<div class="cl" style="left:123.5px;top:432.7px">    <span class="p">name</span>: <span class="s">&#x27;Register&#x27;</span>,</div>
<div class="ln" style="left:-16.5px;top:480.7px">11</div>
<div class="cl" style="left:123.5px;top:480.7px">    <span class="f">component</span>: ()<span class="ih" style="width:229.9px;letter-spacing:1.73px;font-size:25px;padding-left:13px;">: Promise&lt;{...}&gt;</span> => <span class="k">import</span>(<span class="s">&#x27;../views/RegisterView.vue&#x27;</span>)</div>
<div class="ln" style="left:-16.5px;top:528.7px">12</div>
<div class="cl" style="left:123.5px;top:528.7px">  },</div>
<div class="ln" style="left:-16.5px;top:576.7px">13</div>
<div class="cl" style="left:123.5px;top:576.7px">]</div>
<div class="ln" style="left:-16.5px;top:624.7px">14</div>
<div class="cl" style="left:123.5px;top:624.7px"><span class="k">const</span> <span class="pi">router</span><span class="ih" style="width:131.5px;letter-spacing:1.759px;font-size:25px;padding-left:13px;">: Router</span> = <span class="f">createRouter</span>(<span class="ihb" style="width:117.3px;margin-left:4.5px;margin-right:3.5px;letter-spacing:1.305px;font-size:25px">options:</span>{</div>
<div class="ln cur" style="left:-16.5px;top:672.7px">15</div>
<div class="cl" style="left:123.5px;top:672.7px">  <span class="wr"><span class="p">history</span></span>: <span class="f">createWebHistory</span>(),</div>
<div class="ln" style="left:-16.5px;top:720.7px">16</div>
<div class="cl" style="left:123.5px;top:720.7px">  <span class="lv">routes</span></div>
<div class="ln" style="left:-16.5px;top:768.7px">17</div>
<div class="cl" style="left:123.5px;top:768.7px">})</div>
<div class="cl" style="left:123.5px;top:816.7px"><span class="ih" style="width:200px;letter-spacing:0.3px;font-size:25px;padding-left:0px;">2 用法</span></div>
<div class="ln" style="left:-16.5px;top:864.7px">18</div>
<div class="cl" style="left:123.5px;top:864.7px"><span class="k">export</span> <span class="k">default</span> <span class="pi">router</span></div>
</div>
<div class="abs" style="left:1858.1px;top:1050px;width:1.9px;height:143px;background:#313438;"></div>
<div class="abs" style="left:1858.1px;top:1290px;width:1.9px;height:143px;background:#313438;"></div>
<svg style="left:3021px;top:921.5px" width="24" height="20" viewBox="0 0 24 20" ><path d="M2 11 L8.5 17.5 L22 3" fill="none" stroke="#67a566" stroke-width="3.6" stroke-linecap="round" stroke-linejoin="round"/></svg>
<div class="abs" style="left:1848.5px;top:1535.5px;width:19px;height:19px;border-radius:50%;background:#f2c55c"></div>
<div class="abs" style="left:1853px;top:1556px;width:10px;height:2px;background:#f2c55c;"></div>
<div class="abs" style="left:1853px;top:1560.5px;width:10px;height:2.0px;background:#ced0d6;"></div>
<div class="abs" style="left:3032px;top:1464px;width:5px;height:4px;background:#c77dbb;"></div>
<div class="abs" style="left:1721.7px;top:10px;width:319.0px;height:58px;background:rgba(73,162,80,.40);"></div>
<div class="abs" style="left:2408px;top:11.7px;width:271.3px;height:54.0px;background:rgba(73,162,80,.40);"></div>
<div class="abs" style="left:1716.7px;top:829px;width:205.8px;height:76.7px;background:rgba(230,105,150,.42);"></div>
<div class="abs" style="left:2406.5px;top:1141.7px;width:562.5px;height:60.6px;background:rgba(73,162,80,.40);"></div>
<div class="abs" style="left:2408.3px;top:1391.3px;width:601.7px;height:47.7px;background:rgba(73,162,80,.40);"></div>
</div></body></html>
